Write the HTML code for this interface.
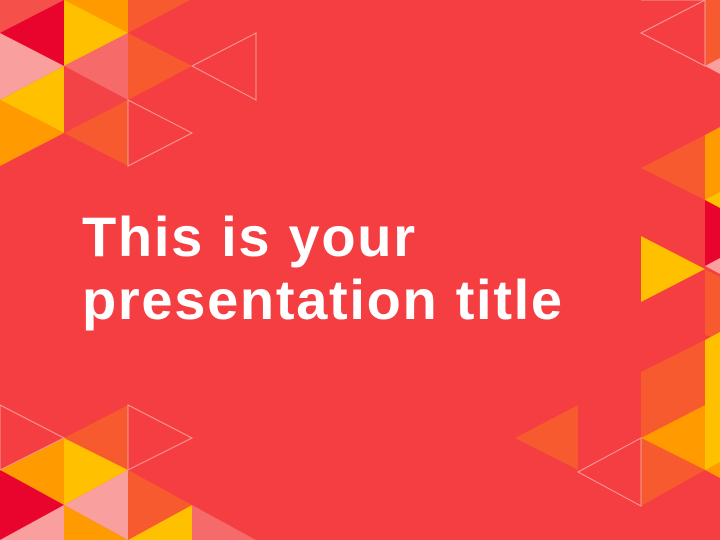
<!DOCTYPE html>
<html><head><style>
html,body{margin:0;padding:0}
body{width:720px;height:540px;overflow:hidden;background:#F43E42;position:relative;font-family:"Liberation Sans",sans-serif}
svg{position:absolute;left:0;top:0}
h1{position:absolute;left:82px;top:205px;margin:0;color:#fff;font-size:56px;line-height:63px;font-weight:bold;letter-spacing:1.7px}
</style></head><body>
<svg width="720" height="540" viewBox="0 0 720 540">
<g stroke="none">
<polygon points="0,0 64,0 0,33" fill="#F5504A"/>
<polygon points="0,33 64,0 64,66" fill="#E8042C"/>
<polygon points="0,33 64,66 0,100" fill="#F9A09F"/>
<polygon points="64,66 0,100 64,133" fill="#FFC000"/>
<polygon points="0,100 64,133 0,166" fill="#FF9A00"/>
<polygon points="64,0 128,0 128,33 64,66" fill="#FFC000"/>
<polygon points="64,0 128,0 128,33" fill="#FF9A00"/>
<polygon points="128,33 64,66 128,100" fill="#F76A6A"/>
<polygon points="64,66 64,133 128,100" fill="#F34346"/>
<polygon points="128,100 64,133 128,166" fill="#F75A2E"/>
<polygon points="128,0 190,0 128,33" fill="#F75A2E"/>
<polygon points="128,33 128,100 192,66" fill="#F75A2E"/>
<polygon points="64,438 128,405 128,470" fill="#F75A2E"/>
<polygon points="0,470 64,438 64,505" fill="#FF9A00"/>
<polygon points="64,438 64,505 128,470" fill="#FFC000"/>
<polygon points="0,470 0,540 64,505" fill="#E8042C"/>
<polygon points="64,505 128,470 128,540" fill="#F9A09F"/>
<polygon points="0,540 64,505 64,540" fill="#F9A09F"/>
<polygon points="64,505 64,540 128,540" fill="#FF9A00"/>
<polygon points="128,470 128,540 192,505" fill="#F75A2E"/>
<polygon points="192,505 128,540 192,540" fill="#FFC000"/>
<polygon points="192,505 192,540 256,540" fill="#F76A6A"/>
<polygon points="641,168 705,135 705,200" fill="#F75A2E"/>
<polygon points="705,135 720,127 720,210 705,200" fill="#FF9A00"/>
<polygon points="705,200 720,192 720,210" fill="#FFC000"/>
<polygon points="705,200 720,208 720,260 705,266" fill="#E8042C"/>
<polygon points="705,266 720,258 720,274" fill="#F9A09F"/>
<polygon points="641,236 641,302 705,269" fill="#FFC000"/>
<polygon points="705,269 720,277 720,340 705,335" fill="#F75A2E"/>
<polygon points="705,0 720,0 720,66 705,66" fill="#F75A2E"/>
<polygon points="705,66 720,58 720,74" fill="#F9A09F"/>
<polygon points="515,438 578,405 578,470" fill="#F75A2E"/>
<polygon points="641,372 705,340 705,405 641,438" fill="#F75A2E"/>
<polygon points="705,340 720,332 720,470 705,470" fill="#FFC000"/>
<polygon points="641,438 705,405 705,470" fill="#FF9A00"/>
<polygon points="641,438 641,506 705,470" fill="#F75A2E"/>
<polygon points="705,470 720,462 720,478" fill="#FF9A00"/>
</g>
<g fill="none" stroke="#F79A96" stroke-width="1">
<polygon points="192,66 256,33 256,100"/>
<polygon points="128,100 128,166 192,133"/>
<polygon points="0,405 0,470 64,438"/>
<polygon points="128,405 128,470 192,438"/>
<polygon points="641,33 705,0 705,66"/>
<polygon points="578,472 641,438 641,506"/>
<line x1="641" y1="0" x2="705" y2="0"/>
</g>
</svg>
<h1>This is your<br>presentation title</h1>
</body></html>
